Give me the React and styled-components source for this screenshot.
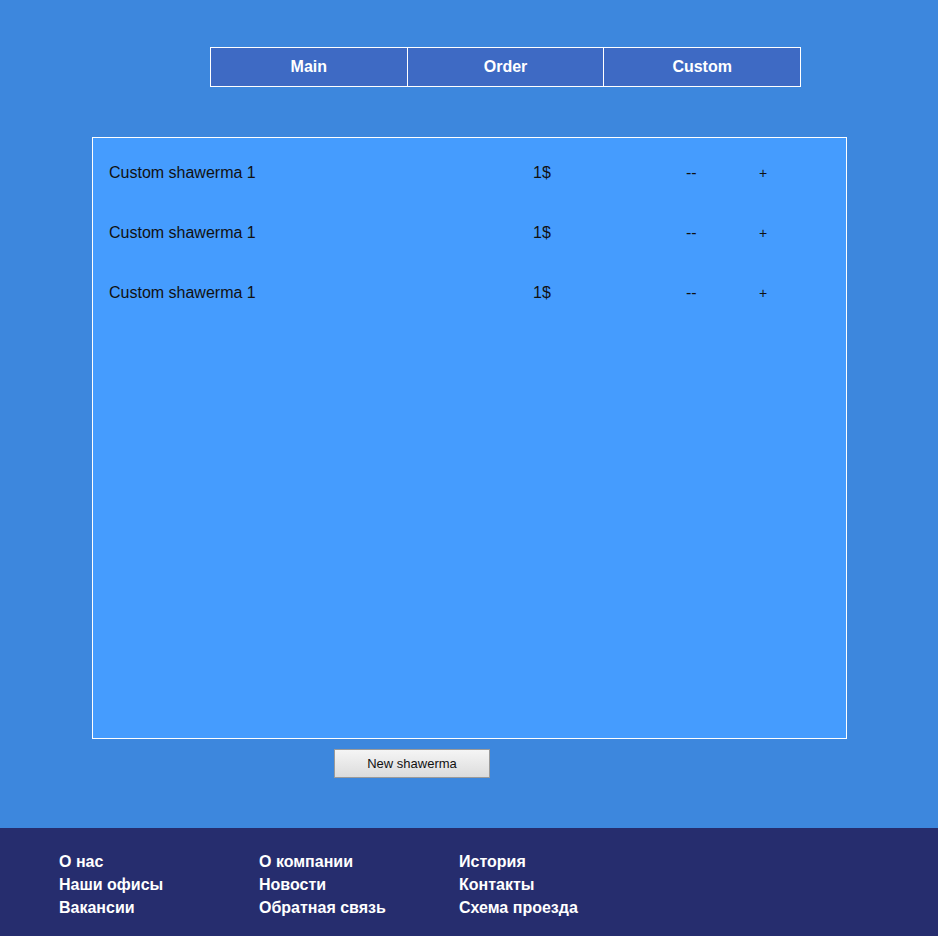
import React from "react";
import styled, { createGlobalStyle } from "styled-components";

const GlobalStyle = createGlobalStyle`
  html, body {
    margin: 0;
    padding: 0;
    background: #3d87dd;
    font-family: "Liberation Sans", Arial, sans-serif;
  }
`;

const Page = styled.div`
  min-height: 100vh;
  display: flex;
  flex-direction: column;
`;

const Main = styled.main`
  flex: 1;
  padding-top: 47px;
`;

const Nav = styled.nav`
  display: flex;
  margin-left: 210px;
  width: 591px;
`;

const NavItem = styled.a`
  flex: 1;
  height: 38px;
  display: flex;
  align-items: center;
  justify-content: center;
  background: #3e6ac4;
  border: 1px solid #ffffff;
  margin-left: -1px;
  &:first-child {
    margin-left: 0;
  }
  color: #ffffff;
  font-weight: bold;
  font-size: 16px;
  cursor: pointer;
`;

const Panel = styled.section`
  margin: 50px 0 0 92px;
  box-sizing: border-box;
  width: 755px;
  height: 602px;
  border: 1px solid #ffffff;
  background: #459cfe;
  padding: 5px 16px;
`;

const Row = styled.div`
  display: grid;
  grid-template-columns: 424px 153px 73px auto;
  align-items: center;
  height: 60px;
  font-size: 16px;
  color: #111111;
`;

const Control = styled.span`
  cursor: pointer;
  font-size: ${(p) => p.$size}px;
`;

const NewButton = styled.button`
  margin: 10px 0 0 334px;
  width: 156px;
  height: 29px;
  border: 1px solid #9a9a9a;
  background: linear-gradient(#f5f5f5, #dcdcdc);
  font-family: "Liberation Sans", Arial, sans-serif;
  font-size: 13px;
  color: #111111;
  padding: 0;
`;

const Footer = styled.footer`
  margin-top: 50px;
  background: #262d6e;
  padding: 22px 0 17px 59px;
  display: grid;
  grid-template-columns: repeat(3, 200px);
`;

const FooterColumn = styled.div`
  display: flex;
  flex-direction: column;
`;

const FooterLink = styled.a`
  color: #ffffff;
  font-weight: bold;
  font-size: 16px;
  line-height: 23px;
  cursor: pointer;
`;

const items = [
  { name: "Custom shawerma 1", price: "1$" },
  { name: "Custom shawerma 1", price: "1$" },
  { name: "Custom shawerma 1", price: "1$" },
];

const footerLinks = [
  ["О нас", "Наши офисы", "Вакансии"],
  ["О компании", "Новости", "Обратная связь"],
  ["История", "Контакты", "Схема проезда"],
];

export default function App() {
  return (
    <Page>
      <GlobalStyle />
      <Main>
        <Nav>
          <NavItem>Main</NavItem>
          <NavItem>Order</NavItem>
          <NavItem>Custom</NavItem>
        </Nav>
        <Panel>
          {items.map((item, i) => (
            <Row key={i}>
              <span>{item.name}</span>
              <span>{item.price}</span>
              <Control $size={16}>--</Control>
              <Control $size={14}>+</Control>
            </Row>
          ))}
        </Panel>
        <NewButton>New shawerma</NewButton>
      </Main>
      <Footer>
        {footerLinks.map((col, i) => (
          <FooterColumn key={i}>
            {col.map((link) => (
              <FooterLink key={link}>{link}</FooterLink>
            ))}
          </FooterColumn>
        ))}
      </Footer>
    </Page>
  );
}
